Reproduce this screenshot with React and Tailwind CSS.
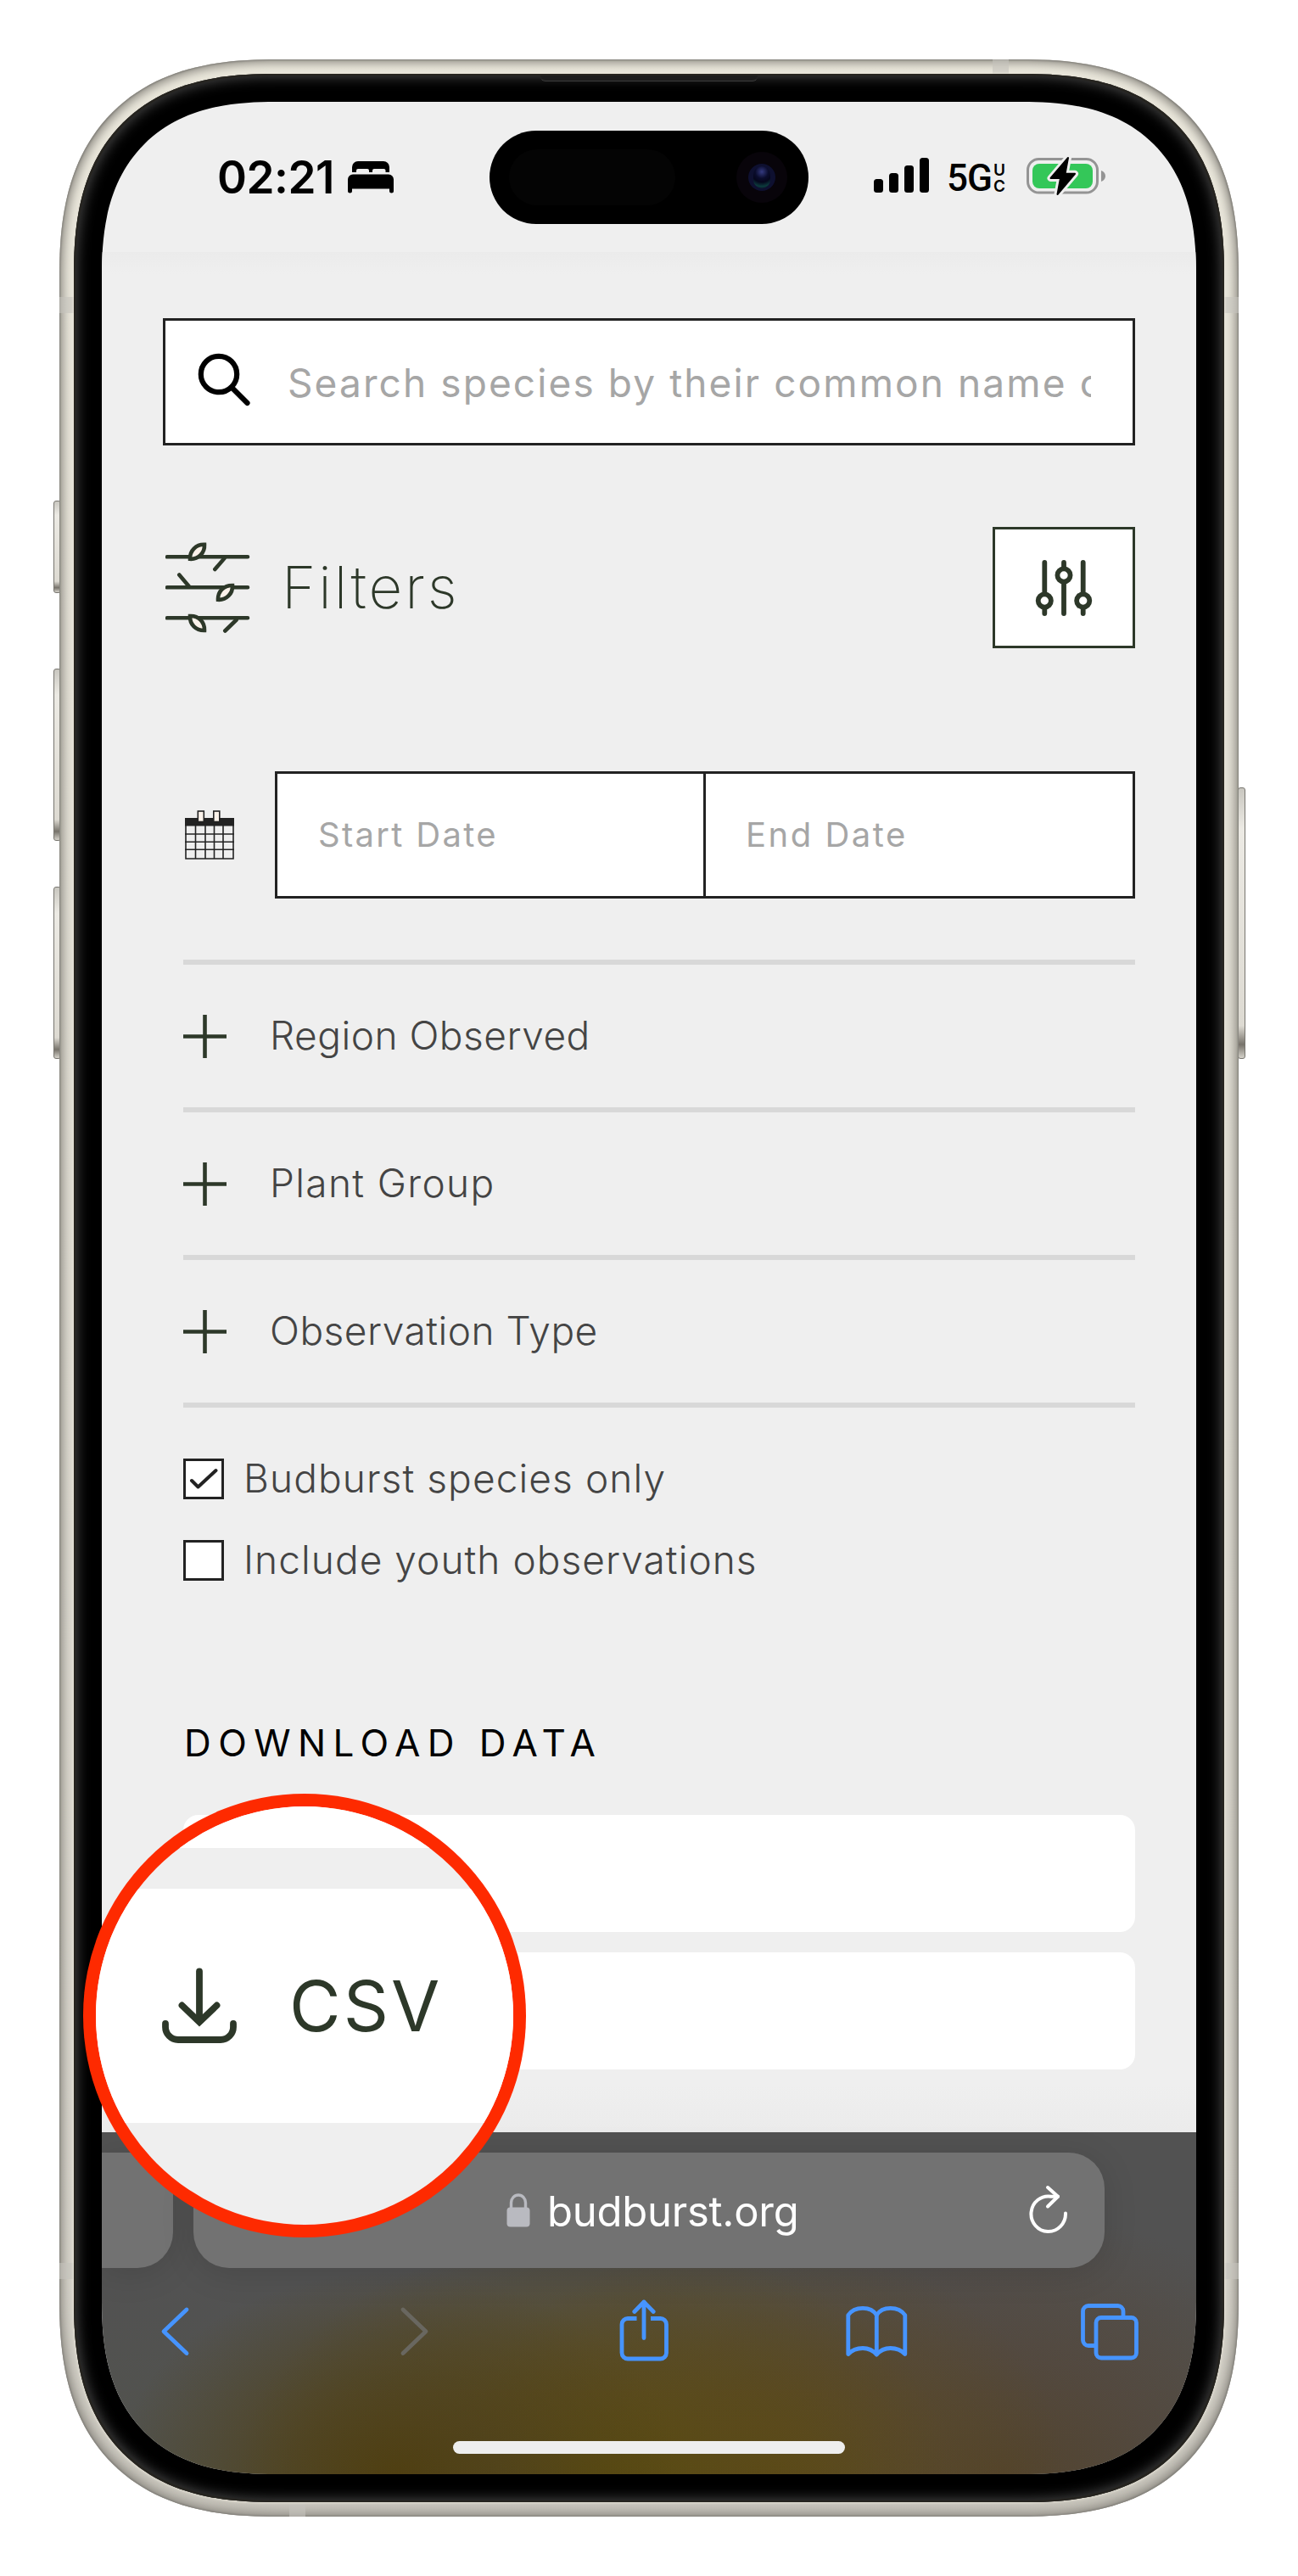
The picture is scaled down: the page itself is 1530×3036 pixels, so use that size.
import React from 'react';

const INTER = "font-['Inter','Liberation_Sans',sans-serif]";

/* ---------- status bar drawings ---------- */

function BedIcon() {
  return (
    <svg className="h-[38px] w-[54px]" viewBox="0 0 54 38">
      <path d="M5 13V7a7 7 0 0 1 7-7h30a7 7 0 0 1 7 7v6h-4.500V11a2 2 0 0 0-2-2H31a2 2 0 0 0-2 2v2h-4V11a2 2 0 0 0-2-2H12a2 2 0 0 0-2 2v2z" />
      <path d="M0 21.500a6 6 0 0 1 6-6h42a6 6 0 0 1 6 6V35a2.500 2.500 0 0 1-5 0v-2.500H5V35a2.500 2.500 0 0 1-5 0z" />
    </svg>
  );
}

function SignalIcon() {
  return (
    <svg className="h-[41px] w-[65px]" viewBox="0 0 65 41">
      <rect x="0" y="25" width="11" height="16" rx="3.500" />
      <rect x="18" y="18" width="11" height="23" rx="3.500" />
      <rect x="36" y="9" width="11" height="32" rx="3.500" />
      <rect x="54" y="0" width="11" height="41" rx="3.500" />
    </svg>
  );
}

function BatteryIcon() {
  const bolt = 'M51 2 30.500 26H42L38.500 45 59 20.800H47.500Z';
  return (
    <svg className="h-[47px] w-[96px]" viewBox="0 0 96 47">
      <rect x="3.500" y="3.500" width="82" height="39.500" rx="13" fill="none" stroke="#949494" strokeWidth="3" />
      <path d="M90 17c3 1 5 3.500 5 6.500s-2 5.500-5 6.500z" fill="#949494" />
      <rect x="9" y="9" width="71" height="29" rx="8" fill="#34c759" />
      <path d={bolt} fill="#efefef" stroke="#efefef" strokeWidth="8" strokeLinejoin="round" />
      <path d={bolt} fill="#000" stroke="#000" strokeWidth="2" strokeLinejoin="round" />
    </svg>
  );
}

/* ---------- page drawings ---------- */

function SearchIcon() {
  return (
    <svg className="h-[72px] w-[72px] shrink-0" viewBox="0 0 72 72" fill="none" stroke="#000" strokeWidth="6.200" strokeLinecap="round">
      <circle cx="30" cy="27" r="21.200" />
      <path d="M45 42.500 63.500 61" />
    </svg>
  );
}

function BranchesIcon() {
  return (
    <svg className="h-[108px] w-[100px]" viewBox="0 0 100 108" fill="none" stroke="#2d3829" strokeWidth="4.600" strokeLinecap="round">
      <path d="M2 17.300H97M2 53.300H97M2 89.300H97" />
      <path d="M69.500 19 58.300 32M16.300 38.500 27.700 52M83.700 91.500 70.300 104.500" />
      <g fill="#fbf2ea" strokeLinecap="butt" strokeMiterlimit="10">
        <path d="M29 19.800C28.500 10 36 2.500 46 2.800 46.500 12.500 39 20.300 29 19.800Z" />
        <path d="M62 67.800C61.500 58 69 50.800 79 51 79.500 60.700 72 68.300 62 67.800Z" />
        <path d="M29 87C39 86.500 46.500 94 46 104 36 104.300 28.500 97 29 87Z" />
      </g>
    </svg>
  );
}

function SlidersIcon() {
  return (
    <svg className="h-[66px] w-[68px]" viewBox="0 0 68 66" fill="none" stroke="#2d3829" strokeWidth="5.800" strokeLinecap="round">
      <path d="M11.300 3V40M11.300 56V63M34 3V10M34 26V63M56.700 3V40M56.700 56V63" />
      <circle cx="11.300" cy="48" r="7.600" />
      <circle cx="34" cy="18" r="7.600" />
      <circle cx="56.700" cy="48" r="7.600" />
    </svg>
  );
}

function CalendarIcon() {
  return (
    <svg className="h-[58px] w-[58px] shrink-0" viewBox="0 0 58 58" fill="none" stroke="#222" strokeWidth="1.600">
      <rect x="0" y="9" width="58" height="9.500" fill="#222" stroke="none" />
      <path d="M1 18V57H57V18M0 28H58M0 37.200H58M0 46.200H58M12.500 18V57M24 18V57M34.500 18V57M45 18V57" />
      <rect x="15.300" y="1" width="7" height="12.500" fill="#fbf2ea" />
      <rect x="33.800" y="1" width="7" height="12.500" fill="#fbf2ea" />
    </svg>
  );
}

function PlusIcon() {
  return (
    <svg className="h-[51px] w-[51px]" viewBox="0 0 51 51" stroke="#2d3829" strokeWidth="4.600">
      <path d="M0 25.500H51M25.500 0V51" />
    </svg>
  );
}

function DownloadIcon() {
  return (
    <svg className="h-[92px] w-[88px]" viewBox="0 0 88 92" fill="none" stroke="#2d3829" strokeWidth="7.800" strokeLinecap="round">
      <path d="M44 5.500V64" />
      <path d="M23.500 45.500 44 65 64.500 45.500" strokeLinejoin="miter" />
      <path d="M4 67V71a15 15 0 0 0 15 15H69a15 15 0 0 0 15-15V67" />
    </svg>
  );
}

/* ---------- browser drawings ---------- */

function LockIcon() {
  return (
    <svg className="h-[40px] w-[28px]" viewBox="0 0 28 40">
      <rect x="0.500" y="16.500" width="27" height="23" rx="4" fill="#b9bac0" />
      <path d="M5.500 18V11a8.500 9 0 0 1 17 0v7" fill="none" stroke="#b9bac0" strokeWidth="3.400" />
    </svg>
  );
}

function ReloadIcon() {
  return (
    <svg className="h-[58px] w-[46px]" viewBox="0 0 46 58" fill="none" stroke="#fff" strokeWidth="4" strokeLinecap="round" strokeLinejoin="round">
      <path d="M43 33.500A20.300 20.800 0 1 1 26 13.700L34 13.700" />
      <path d="M22 3 34 13.700 22 25.500" />
    </svg>
  );
}

function ToolIcon({ name, className }) {
  const shapes = {
    back: <path d="M54 14 27 39.700 54 65.500" />,
    forward: <path d="M27 14 54 39.700 27 65.500" />,
    share: (
      <>
        <path d="M31.500 24.500H21a7 7 0 0 0-7 7V65a7 7 0 0 0 7 7H59.500a7 7 0 0 0 7-7V31.500a7 7 0 0 0-7-7H48" strokeLinecap="butt" />
        <path d="M40 47.500V5M28.800 16.500 40 5 51.200 16.500" />
      </>
    ),
    book: (
      <>
        <path d="M40.300 20.500V67C36 62 30.500 59.500 24 59.500 17 59.500 11 62 6.800 66.500V20.500C10.500 15 17 12.300 24 12.300 31 12.300 37 15 40.300 20.500Z" />
        <path d="M40.300 20.500C43.600 15 49.600 12.300 56.600 12.300 63.600 12.300 70 15 73.800 20.500V66.500C69.600 62 63.600 59.500 56.600 59.500 50.100 59.500 44.600 62 40.300 67" />
      </>
    ),
    tabs: (
      <>
        <rect x="24" y="23.500" width="47.500" height="47.500" rx="6" />
        <path d="M22 56.500H15a6.500 6.500 0 0 1-6.500-6.500V16a6.500 6.500 0 0 1 6.500-6.500H49.500a6.500 6.500 0 0 1 6.500 6.500V22" strokeLinecap="butt" />
      </>
    ),
  };
  return (
    <svg className={`h-[80px] w-[80px] shrink-0 ${className}`} viewBox="0 0 80 80" fill="none" stroke="currentColor" strokeWidth="4.800" strokeLinecap="round" strokeLinejoin="round">
      {shapes[name]}
    </svg>
  );
}

/* ---------- sections ---------- */

function StatusBar() {
  return (
    <header className="h-[177px] pt-[34px]">
      <div className="flex h-[110px] items-center">
        <div className="flex w-[457px] items-center pl-[136px]">
          <span className="w-[154px] text-[53px] leading-none font-semibold tracking-[-0.5px]">02:21</span>
          <BedIcon />
        </div>
        <div className="flex h-[110px] w-[376px] items-center justify-between rounded-full bg-black pr-[25px] pl-[23px]">
          <div className="h-[66px] w-[196px] rounded-full bg-[#040404]" />
          <div className="flex size-[60px] items-center justify-center rounded-full bg-[#08040a]">
            <div className="flex size-[32px] items-center justify-center rounded-full bg-[#0e1030]">
              <div className="h-[26px] w-[20px] rounded-full bg-[radial-gradient(circle_at_50%_25%,#343a80_0%,#0a0c2c_35%,#05061c_55%,#0c3a3c_78%,#08081f_100%)]" />
            </div>
          </div>
        </div>
        <div className="flex items-center pl-[77px]">
          <div className="-mt-[5px]"><SignalIcon /></div>
          <span className="mt-[2px] ml-[21px] w-[55px] font-['Roboto',sans-serif] text-[44px] leading-none font-medium tracking-[-1px]">5G</span>
          <span className="mt-px flex w-[37px] flex-col text-[19px] leading-[19px] font-semibold">
            <span>U</span>
            <span>C</span>
          </span>
          <div className="-mt-[4px]"><BatteryIcon /></div>
        </div>
      </div>
    </header>
  );
}

function FilterRow({ label, className }) {
  return (
    <li className="flex h-[174px] items-center border-t-[6px] border-[#d8d8d8]">
      <PlusIcon />
      <span className={`-mt-[2px] ml-[51px] text-[46px] leading-none font-light whitespace-nowrap text-[#444] ${className}`}>{label}</span>
    </li>
  );
}

function CheckRow({ label, checked, className }) {
  return (
    <label className="flex h-[48px] items-center">
      <span className="flex size-[48px] items-center justify-center border-[3px] border-[#222] bg-white">
        {checked && (
          <svg className="h-[26px] w-[34px]" viewBox="0 0 34 26" fill="none" stroke="#222" strokeWidth="4" strokeLinecap="round" strokeLinejoin="round">
            <path d="M3 15 10.500 22.500 31.500 3" />
          </svg>
        )}
      </span>
      <span className={`-mt-[2px] ml-[23px] text-[46px] leading-none font-light whitespace-nowrap text-[#444] ${className}`}>{label}</span>
    </label>
  );
}

function Page() {
  return (
    <main className="h-[2216px] bg-[linear-gradient(#ebebeb_0px,#efefef_26px,#efefef_2160px,#ebebeb_2216px)] px-[72px] pt-[78px]">
      <div className="flex h-[150px] items-center border-[3px] border-[#222] bg-white pr-[49px] pl-[33px]">
        <SearchIcon />
        <div className="ml-[39px] w-[947px] overflow-hidden pt-px text-[46px] leading-[60px] tracking-[2.100px] whitespace-nowrap text-[#a6a6a6]">
          Search species by their common name o
        </div>
      </div>

      <div className="mt-[96px] flex h-[143px] items-center text-[#2d3829]">
        <div className="ml-[3px]"><BranchesIcon /></div>
        <h1 className="ml-[37px] text-[69px] leading-none font-extralight tracking-[2.900px]">Filters</h1>
        <button className="ml-auto flex h-[143px] w-[168px] items-center justify-center border-[3px] border-[#2d3829] bg-white">
          <SlidersIcon />
        </button>
      </div>

      <div className="mt-[145px] flex h-[150px] items-center pl-[26px]">
        <CalendarIcon />
        <div className="ml-[48px] flex h-[150px] flex-1 border-[3px] border-[#222] bg-white text-[40px] leading-none text-[#a6a6a6]">
          <div className="flex w-[505px] items-center border-r-[3px] border-[#222] pl-[48px] tracking-[2.300px]">Start Date</div>
          <div className="flex flex-1 items-center pl-[47px] tracking-[2.500px]">End Date</div>
        </div>
      </div>

      <section className="mt-[72px] ml-[24px]">
        <ul className="border-b-[6px] border-[#d8d8d8]">
          <FilterRow label="Region Observed" className="tracking-[0.5px]" />
          <FilterRow label="Plant Group" className="tracking-[1.350px]" />
          <FilterRow label="Observation Type" className="tracking-[0.5px]" />
        </ul>
        <div className="mt-[60px] flex flex-col gap-[48px]">
          <CheckRow label="Budburst species only" checked className="tracking-[1.100px]" />
          <CheckRow label="Include youth observations" className="tracking-[1.050px]" />
        </div>
        <h2 className="mt-[161px] ml-px text-[44px] leading-[60px] tracking-[8.400px]">DOWNLOAD DATA</h2>
        <div className="mt-[55px] flex flex-col gap-[24px]">
          <div className="h-[138px] rounded-[18px] bg-white" />
          <div className="h-[138px] rounded-[18px] bg-white" />
        </div>
      </section>
    </main>
  );
}

function BrowserBar() {
  return (
    <footer className="h-[403px] bg-[radial-gradient(ellipse_330px_240px_at_27%_100%,#4f3f12_0%,#4f411ad0_35%,#50452a00_100%),radial-gradient(ellipse_420px_290px_at_45%_102%,#5a4b0e_0%,#5a4a18d0_40%,#57492800_100%),radial-gradient(ellipse_360px_280px_at_60%_100%,#5d4916_0%,#5a4822c0_40%,#55463200_100%),radial-gradient(ellipse_420px_310px_at_82%_100%,#52432d_0%,#53463ac0_45%,#53494200_100%),linear-gradient(#525252_0%,#525252_45%,#51524c_100%)] pt-[24px]">
      <div className="flex h-[136px]">
        <div className="h-[136px] w-[84px] rounded-r-[42px] bg-[#727272] shadow-[0_6px_40px_rgba(0,0,0,0.12)]" />
        <div className="ml-[24px] flex h-[136px] w-[1074px] items-center rounded-[42px] bg-[#727272] shadow-[0_6px_40px_rgba(0,0,0,0.12)]">
          <div className="ml-[369px]"><LockIcon /></div>
          <span className="ml-[20px] pt-[2px] text-[49px] leading-none tracking-[-0.250px] text-white">budburst.org</span>
          <div className="mr-[43px] mb-[3px] ml-auto"><ReloadIcon /></div>
        </div>
      </div>
      <nav className="flex h-[150px] items-center pl-[46px] text-[#4694ff]">
        <ToolIcon name="back" className="" />
        <ToolIcon name="forward" className="ml-[202px] text-[#696760]" />
        <ToolIcon name="share" className="ml-[191px]" />
        <ToolIcon name="book" className="ml-[194px]" />
        <ToolIcon name="tabs" className="ml-[195px]" />
      </nav>
      <div className="mt-[54px] ml-[414px] h-[15px] w-[462px] rounded-full bg-[#eee]" />
    </footer>
  );
}

function Magnifier() {
  return (
    <div className="absolute top-[2114px] left-[98px] h-[523px] w-[522px] rounded-full bg-[#fe2a00] p-[15px]">
      <div className="h-[493px] w-[492px] overflow-hidden rounded-full bg-[#efefef]">
        <div className="h-[49px] bg-white" />
        <div className="mt-[48px] flex h-[276px] items-center bg-white pl-[78px] text-[#2d3829]">
          <DownloadIcon />
          <span className="ml-[62px] text-[83px] leading-none tracking-[3px]">CSV</span>
        </div>
      </div>
    </div>
  );
}

const BUTTON = 'absolute w-[9px] rounded-[3px] border border-[#77756f] bg-[linear-gradient(#c9c7c0,#eceae4_15%,#dddad2_88%,#77736b_95%,#d5d2ca)]';
const BAND = 'absolute bg-[#c4c3bd] opacity-60';

export default function App() {
  return (
    <div className={`relative h-[3036px] w-[1530px] overflow-hidden bg-white pt-[70px] pl-[70px] text-black ${INTER}`}>
      <div className={`${BUTTON} top-[590px] left-[63px] h-[109px]`} />
      <div className={`${BUTTON} top-[788px] left-[63px] h-[203px]`} />
      <div className={`${BUTTON} top-[1045px] left-[63px] h-[203px]`} />
      <div className={`${BUTTON} top-[928px] left-[1459px] h-[320px]`} />

      <div className="relative h-[2896px] w-[1390px] overflow-hidden rounded-[215px] bg-[linear-gradient(#ebe8dc_0%,#dedbd1_50%,#d6d3ca_90%,#c6c3ba_100%)] px-[17px] pt-[17px] shadow-[inset_0_0_2px_1px_#83817b,inset_0_0_12px_4px_#8d8a83] supports-[corner-shape:squircle]:rounded-[256px] supports-[corner-shape:squircle]:[corner-shape:superellipse(1.31)]">
        <div className={`${BAND} top-0 left-[1100px] h-[18px] w-[19px]`} />
        <div className={`${BAND} bottom-0 left-[271px] h-[18px] w-[19px]`} />
        <div className={`${BAND} top-[280px] left-0 h-[19px] w-[18px]`} />
        <div className={`${BAND} top-[280px] right-0 h-[19px] w-[18px]`} />
        <div className={`${BAND} top-[2597px] left-0 h-[19px] w-[18px]`} />
        <div className={`${BAND} top-[2597px] right-0 h-[19px] w-[18px]`} />
        <div className="relative h-[2862px] w-[1356px] rounded-[198px] bg-black px-[33px] pt-[33px] shadow-[inset_0_0_1px_2px_#26241f,inset_0_0_16px_3px_#4a4a4a,0_0_3px_1px_#e6e2d6] supports-[corner-shape:squircle]:rounded-[237px] supports-[corner-shape:squircle]:[corner-shape:superellipse(1.31)]">
          <div className="absolute top-[2px] left-[550px] h-[7px] w-[256px] rounded-b-[6px] border-b border-[#3c3c3c] bg-[#1d1d1d]" />
          <div className="h-[2796px] w-[1290px] overflow-hidden rounded-[172px] bg-[#efefef] supports-[corner-shape:squircle]:rounded-[205px] supports-[corner-shape:squircle]:[corner-shape:superellipse(1.31)]">
            <StatusBar />
            <Page />
            <BrowserBar />
          </div>
        </div>
      </div>

      <Magnifier />
    </div>
  );
}
